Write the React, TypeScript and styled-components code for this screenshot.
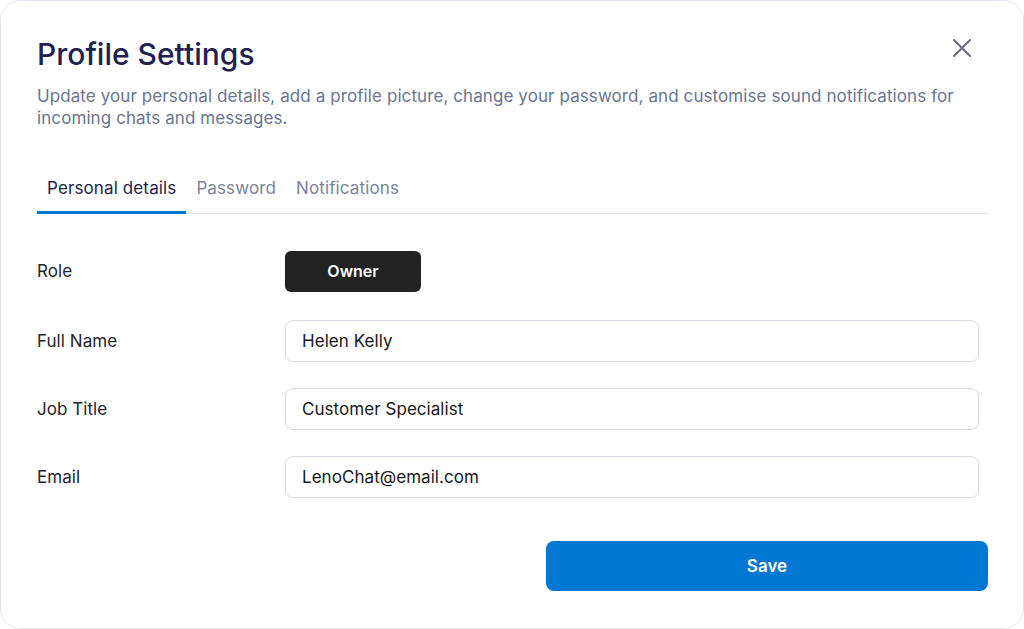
import React from 'react';
import styled, { createGlobalStyle } from 'styled-components';

const GlobalStyle = createGlobalStyle`
  * { box-sizing: border-box; }
  html, body { margin: 0; padding: 0; background: #ffffff; }
  body { font-family: Inter, "Noto Sans", sans-serif; -webkit-font-smoothing: antialiased; }
`;

const Card = styled.div`
  position: relative;
  width: 1024px;
  height: 629px;
  border: 1px solid #e3e6ee;
  border-radius: 20px;
  background: #ffffff;
  padding: 34px 35px 0 36px;
  display: flex;
  flex-direction: column;
`;

const Title = styled.h1`
  margin: 0;
  font-size: 30px;
  line-height: 38px;
  font-weight: 500;
  color: #22204f;
  letter-spacing: 0;
`;

const Close = styled.button`
  position: absolute;
  top: 36px;
  right: 50px;
  width: 22px;
  height: 22px;
  padding: 0;
  border: none;
  background: none;
  display: flex;
  align-items: center;
  justify-content: center;
  cursor: pointer;
`;

const Description = styled.p`
  margin: 12px 0 0;
  font-size: 17px;
  line-height: 22px;
  letter-spacing: 0.09px;
  color: #6b7590;
  max-width: 930px;
`;

const Tabs = styled.div`
  display: flex;
  margin-top: 34px;
  border-bottom: 1px solid #e2e5ec;
`;

const Tab = styled.button<{ $active?: boolean }>`
  border: none;
  background: none;
  font-family: inherit;
  font-size: 17px;
  line-height: 22px;
  letter-spacing: 0.12px;
  padding: 14px 10px 12px;
  margin-bottom: -1px;
  color: ${p => (p.$active ? '#24224d' : '#7a8399')};
  border-bottom: 3px solid ${p => (p.$active ? '#0077d2' : 'transparent')};
  cursor: pointer;
`;

const Form = styled.div`
  display: flex;
  flex-direction: column;
  gap: 26px;
  margin-top: 36px;
  padding-right: 9px;
`;

const Row = styled.div<{ $first?: boolean }>`
  display: grid;
  grid-template-columns: 248px 1fr;
  align-items: center;
  min-height: 42px;
  margin-bottom: ${p => (p.$first ? '2px' : '0')};
`;

const Label = styled.label`
  font-size: 17px;
  letter-spacing: 0.05px;
  color: #23252c;
`;

const RoleBadge = styled.div`
  width: 136px;
  height: 41px;
  border-radius: 6px;
  background: #222222;
  color: #ffffff;
  font-size: 16px;
  font-weight: 600;
  display: flex;
  align-items: center;
  justify-content: center;
`;

const Input = styled.input`
  height: 42px;
  width: 100%;
  border: 1px solid #d6dae3;
  border-radius: 8px;
  padding: 0 16px;
  font-family: inherit;
  font-size: 17px;
  letter-spacing: 0.05px;
  color: #17181c;
  outline: none;
  background: #ffffff;
`;

const Footer = styled.div`
  display: flex;
  justify-content: flex-end;
  margin-top: 43px;
`;

const SaveButton = styled.button`
  width: 442px;
  height: 50px;
  border: none;
  border-radius: 8px;
  background: #0077d2;
  color: #ffffff;
  font-family: inherit;
  font-size: 17px;
  font-weight: 600;
  cursor: pointer;
`;

const fields = [
  { label: 'Full Name', value: 'Helen Kelly' },
  { label: 'Job Title', value: 'Customer Specialist' },
  { label: 'Email', value: 'LenoChat@email.com' },
];

const App = () => {
  return (
    <>
      <GlobalStyle />
      <Card>
        <Title>Profile Settings</Title>
        <Close aria-label="Close">
          <svg width="20" height="20" viewBox="0 0 20 20" fill="none">
            <path d="M2 2 L18 18 M18 2 L2 18" stroke="#6b6c78" strokeWidth="2" strokeLinecap="round" />
          </svg>
        </Close>
        <Description>
          Update your personal details, add a profile picture, change your password, and customise sound notifications for incoming chats and messages.
        </Description>

        <Tabs>
          <Tab $active>Personal details</Tab>
          <Tab>Password</Tab>
          <Tab>Notifications</Tab>
        </Tabs>

        <Form>
          <Row $first>
            <Label>Role</Label>
            <RoleBadge>Owner</RoleBadge>
          </Row>
          {fields.map(f => (
            <Row key={f.label}>
              <Label>{f.label}</Label>
              <Input defaultValue={f.value} />
            </Row>
          ))}
        </Form>

        <Footer>
          <SaveButton>Save</SaveButton>
        </Footer>
      </Card>
    </>
  );
};

export default App;
